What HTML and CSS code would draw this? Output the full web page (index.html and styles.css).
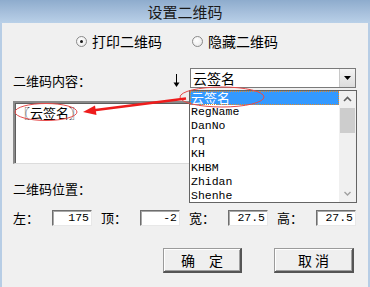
FILE: index.html
```html
<!DOCTYPE html>
<html>
<head>
<meta charset="utf-8">
<link rel="stylesheet" href="styles.css">
</head>
<body>
<div class="window">
  <div class="titlebar">设置二维码</div>
  <div class="body">
    <div class="radios">
      <label class="radio"><span class="dot checked"></span><span>打印二维码</span></label>
      <label class="radio"><span class="dot"></span><span>隐藏二维码</span></label>
    </div>
    <div class="content-row">
      <span class="label">二维码内容：</span>
      <svg class="down" width="7" height="14" viewBox="0 0 7 14"><path d="M3.5 0V12" stroke="#000" stroke-width="1"/><path d="M0.5 8.5L3.5 13L6.5 8.5Z" fill="#000"/></svg>
      <div class="combo">
        <span class="combo-text">云签名</span>
        <span class="combo-btn"><svg width="7" height="4" viewBox="0 0 7 4"><path d="M0 0H7L3.5 4Z" fill="#000"/></svg></span>
      </div>
    </div>
    <div class="textarea">〖云签名〗</div>
    <div class="label pos-label">二维码位置：</div>
    <div class="fields">
      <div class="field"><span class="flabel">左：</span><span class="input">175</span></div>
      <div class="field"><span class="flabel">顶：</span><span class="input">-2</span></div>
      <div class="field"><span class="flabel">宽：</span><span class="input">27.5</span></div>
      <div class="field"><span class="flabel">高：</span><span class="input">27.5</span></div>
    </div>
    <div class="buttons">
      <button class="btn">确　定</button>
      <button class="btn">取 消</button>
    </div>
  </div>

  <div class="dropdown">
    <ul class="items">
      <li class="item selected">云签名</li>
      <li class="item">RegName</li>
      <li class="item">DanNo</li>
      <li class="item">rq</li>
      <li class="item">KH</li>
      <li class="item">KHBM</li>
      <li class="item">Zhidan</li>
      <li class="item">Shenhe</li>
    </ul>
    <div class="scrollbar">
      <svg class="sb-arrow" width="17" height="17" viewBox="0 0 17 17"><path d="M5 10L8.5 6.5L12 10" fill="none" stroke="#606060" stroke-width="1.6"/></svg>
      <div class="sb-track"><div class="sb-thumb"></div></div>
      <svg class="sb-arrow" width="17" height="17" viewBox="0 0 17 17"><path d="M5.5 7L8.5 10L11.5 7" fill="none" stroke="#a0a0a0" stroke-width="1.4"/></svg>
    </div>
  </div>

  <svg class="annot" width="370" height="287" viewBox="0 0 370 287">
    <ellipse cx="46" cy="112" rx="31" ry="8.5" fill="none" stroke="#e64b4b" stroke-width="1"/>
    <ellipse cx="222" cy="97" rx="42" ry="10" fill="none" stroke="#e64b4b" stroke-width="1"/>
    <path d="M186 98.5L92 110.5" stroke="#ee1c1c" stroke-width="2.6"/>
    <path d="M83 112L95 105.5L96.5 115Z" fill="#ee1c1c"/>
  </svg>
</div>
</body>
</html>
```

FILE: styles.css
```css
* { box-sizing: border-box; }
html, body {
  margin: 0;
  padding: 0;
  width: 370px;
  height: 287px;
  overflow: hidden;
  background: #f0f0f0;
}
.window {
  position: relative;
  width: 370px;
  height: 287px;
  font-family: "Noto Sans CJK SC", "Liberation Sans", sans-serif;
  font-size: 13px;
  color: #000;
}
.titlebar {
  height: 23px;
  line-height: 24px;
  text-align: center;
  font-size: 15px;
  color: #1a1a1a;
  background: linear-gradient(to bottom, #8eaccd 0%, #a7c0dc 55%, #b9d0e8 100%);
}
.body {
  height: 264px;
  border-left: 2px solid #b7cde5;
  border-right: 2px solid #b7cde5;
  padding: 0 12px 0 11px;
  display: flex;
  flex-direction: column;
}
.radios {
  margin-top: 10px;
  height: 16px;
  display: flex;
  align-items: center;
  padding-left: 63px;
  gap: 30px;
  font-size: 14px;
}
.radio {
  display: flex;
  align-items: center;
  gap: 5px;
  line-height: 16px;
}
.dot {
  width: 11px;
  height: 11px;
  border-radius: 50%;
  border: 1px solid #8a8a8a;
  background: radial-gradient(circle at 40% 40%, #ffffff 0%, #f0f0f0 60%, #d8d8d8 100%);
  position: relative;
}
.dot.checked::after {
  content: "";
  position: absolute;
  left: 3px;
  top: 3px;
  width: 3px;
  height: 3px;
  border-radius: 50%;
  background: #1a1a1a;
}
.content-row {
  margin-top: 19px;
  height: 20px;
  display: flex;
  align-items: center;
}
.label {
  font-size: 13px;
  line-height: 16px;
}
.content-row .label {
  padding-top: 6px;
  flex: 1;
}
.down {
  margin-right: 10px;
  margin-top: 6px;
}
.combo {
  width: 166px;
  height: 20px;
  border: 1px solid #7a7a7a;
  background: #fff;
  display: flex;
  align-items: center;
  justify-content: space-between;
}
.combo-text {
  font-size: 14px;
  line-height: 16px;
  padding-left: 2px;
}
.combo-btn {
  width: 16px;
  height: 18px;
  border-left: 1px solid #c8c8c8;
  background: linear-gradient(to bottom, #f4f4f4, #dcdcdc);
  display: flex;
  align-items: center;
  justify-content: center;
}
.textarea {
  margin-top: 13px;
  height: 63px;
  width: 343px;
  background: #fff;
  border-top: 2px solid #8a8a8a;
  border-left: 2px solid #8a8a8a;
  border-right: 1px solid #dcdcdc;
  border-bottom: 1px solid #dcdcdc;
  box-shadow: inset 1px 1px 0 #5e5e5e;
  padding: 2px 0 0 2px;
  font-size: 13px;
  line-height: 16px;
}
.pos-label {
  margin-top: 17px;
  height: 16px;
}
.fields {
  margin-top: 13px;
  height: 16px;
  display: flex;
  gap: 9px;
}
.field {
  display: flex;
  align-items: center;
}
.flabel {
  width: 39px;
  font-size: 13px;
  line-height: 16px;
}
.input {
  width: 40px;
  height: 16px;
  background: #fff;
  border-top: 1px solid #6e6e6e;
  border-left: 1px solid #6e6e6e;
  border-right: 1px solid #e8e8e8;
  border-bottom: 1px solid #e8e8e8;
  box-shadow: inset 1px 1px 0 #a8a8a8;
  text-align: right;
  padding-right: 2px;
  font-family: "Liberation Mono", monospace;
  font-size: 11.5px;
  line-height: 14px;
}
.buttons {
  margin-top: 22px;
  display: flex;
  padding-left: 150px;
  gap: 32px;
}
.btn {
  width: 79px;
  height: 25px;
  margin: 0;
  padding: 0;
  font-family: "Noto Sans CJK SC", sans-serif;
  font-size: 14px;
  color: #000;
  background: #efefef;
  border: 1px solid #9b9b9b;
  border-right: 2px solid #555;
  border-bottom: 2px solid #555;
  box-shadow: inset 1px 1px 0 #fff, inset -1px -1px 0 #a0a0a0;
}
.btn + .btn { width: 80px; }

.dropdown {
  position: absolute;
  left: 189px;
  top: 90px;
  width: 168px;
  height: 113px;
  background: #fff;
  border: 1px solid #646464;
  display: flex;
  overflow: hidden;
}
.items {
  list-style: none;
  margin: 0;
  padding: 0;
  flex: 1;
}
.item {
  height: 14px;
  line-height: 14px;
  padding-left: 1px;
  font-family: "Liberation Mono", "Noto Sans CJK SC", monospace;
  font-size: 11.5px;
  white-space: nowrap;
}
.item.selected {
  background: #3399ff;
  color: #fff;
  font-family: "Noto Sans CJK SC", sans-serif;
  font-size: 13px;
  outline: 1px dotted #e08a2a;
  outline-offset: -1px;
}
.scrollbar {
  width: 17px;
  background: #f0f0f0;
  display: flex;
  flex-direction: column;
}
.sb-arrow { display: block; flex: none; }
.sb-track {
  flex: 1;
  position: relative;
}
.sb-thumb {
  margin: 0 1px;
  height: 25px;
  background: #cdcdcd;
}
.annot {
  position: absolute;
  left: 0;
  top: 0;
  pointer-events: none;
}
```
